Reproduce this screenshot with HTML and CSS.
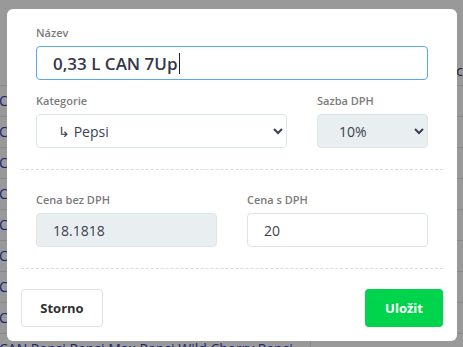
FILE: index.html
```html
<!DOCTYPE html>
<html lang="cs">
<head>
    <meta charset="UTF-8">
    <meta name="viewport" content="width=device-width, initial-scale=1.0">
    <title>Upravit produkt</title>
    <link rel="stylesheet" href="styles.css">
</head>

<body>
    <div class="page">
        <div class="page-head"></div>
        <div class="list">
            <div class="list-row"><span class="list-name"></span><span class="list-note">ic</span></div>
            <div class="list-row"><span class="list-name">C</span><span class="list-note"></span></div>
            <div class="list-row"><span class="list-name">C</span><span class="list-note"></span></div>
            <div class="list-row"><span class="list-name">C</span><span class="list-note"></span></div>
            <div class="list-row"><span class="list-name">C</span><span class="list-note"></span></div>
            <div class="list-row"><span class="list-name">C</span><span class="list-note"></span></div>
            <div class="list-row"><span class="list-name">C</span><span class="list-note"></span></div>
            <div class="list-row"><span class="list-name">C</span><span class="list-note"></span></div>
            <div class="list-row"><span class="list-name">C</span><span class="list-note"></span></div>
            <div class="list-row"><span class="list-name">CAN Pepsi Pepsi Max Pepsi Wild Cherry Pepsi</span><span class="list-note"></span></div>
        </div>
    </div>

    <div class="backdrop"></div>

    <div class="modal">
        <div class="modal-section section-top">
            <div class="group">
                <label class="label">Název</label>
                <div class="field field-name">0,33 L CAN 7Up<span class="caret"></span></div>
            </div>
            <div class="row row-category">
                <div class="group">
                    <label class="label">Kategorie</label>
                    <select class="field">
                        <option>↳ Pepsi</option>
                    </select>
                </div>
                <div class="group">
                    <label class="label">Sazba DPH</label>
                    <select class="field field-muted">
                        <option>10%</option>
                    </select>
                </div>
            </div>
        </div>

        <div class="modal-section section-price">
            <div class="row row-price">
                <div class="group">
                    <label class="label">Cena bez DPH</label>
                    <input class="field field-muted" type="text" value="18.1818" readonly>
                </div>
                <div class="group">
                    <label class="label">Cena s DPH</label>
                    <input class="field" type="text" value="20">
                </div>
            </div>
        </div>

        <div class="modal-footer">
            <button class="btn btn-cancel">Storno</button>
            <button class="btn btn-save">Uložit</button>
        </div>
    </div>
</body>

</html>
```

FILE: styles.css
```css
body {
    font-family: "Open Sans", Arial, sans-serif;
    background-color: #fff;
    margin: 0;
    padding: 0;
    overflow: hidden;
}

/* page behind the dialog */

.page {
    height: 347px;
    overflow: hidden;
}

.page-head {
    height: 55px;
}

.list-row {
    display: flex;
    height: 30px;
    border-bottom: 1px solid #e2e2e2;
    align-items: center;
    font-size: 14px;
    color: #2f40b8;
    white-space: nowrap;
}

.list-name {
    width: 311px;
    margin-left: -1px;
    height: 100%;
    line-height: 30px;
    border-right: 1px solid #e2e2e2;
    overflow: hidden;
}

.list-note {
    padding-left: 146px;
    color: #333;
}

.backdrop {
    position: fixed;
    inset: 0;
    background-color: rgba(0, 0, 0, 0.4);
}

/* dialog */

.modal {
    position: absolute;
    left: 7px;
    top: 9px;
    width: 450px;
    box-sizing: border-box;
    padding: 14px;
    background-color: #fff;
    border-radius: 6px;
}

.modal-section {
    border-bottom: 1px dashed #dcdcdc;
    padding: 0 15px 21px;
}

.section-top {
    padding-top: 2px;
}

.section-price {
    padding-top: 22px;
}

.group {
    display: flex;
    flex-direction: column;
}

.row {
    display: grid;
    column-gap: 30px;
    margin-top: 13px;
}

.row-category {
    grid-template-columns: 1fr 111px;
}

.row-price {
    grid-template-columns: 1fr 1fr;
    margin-top: 0;
}

.label {
    font-size: 11px;
    font-weight: 600;
    line-height: 16px;
    color: #7b7b7b;
    margin-bottom: 5px;
}

.field {
    box-sizing: border-box;
    height: 34px;
    width: 100%;
    padding: 0 16px;
    border: 1px solid #dbe5e8;
    border-radius: 4px;
    background-color: #fff;
    font-family: inherit;
    font-size: 14px;
    color: #3b3f51;
    outline: none;
}

select.field {
    padding-left: 17px;
}

.field-muted {
    background-color: #e9eff0;
}

.field-name {
    display: flex;
    align-items: center;
    border-color: #5aa8ea;
    font-size: 17px;
    font-weight: 600;
    color: #33384a;
}

.caret {
    display: inline-block;
    width: 1px;
    height: 21px;
    margin-left: 1px;
    background-color: #222;
}

.modal-footer {
    display: flex;
    justify-content: space-between;
    padding-top: 20px;
}

.btn {
    height: 38px;
    border-radius: 4px;
    font-family: inherit;
    font-size: 13px;
    font-weight: 700;
    cursor: pointer;
}

.btn-cancel {
    width: 82px;
    background-color: #fff;
    border: 1px solid #e3e3e3;
    color: #2f2f2f;
}

.btn-save {
    width: 78px;
    background-color: #00d34c;
    border: none;
    color: #fff;
}

.btn-save:hover {
    background-color: #00bf44;
}
```
